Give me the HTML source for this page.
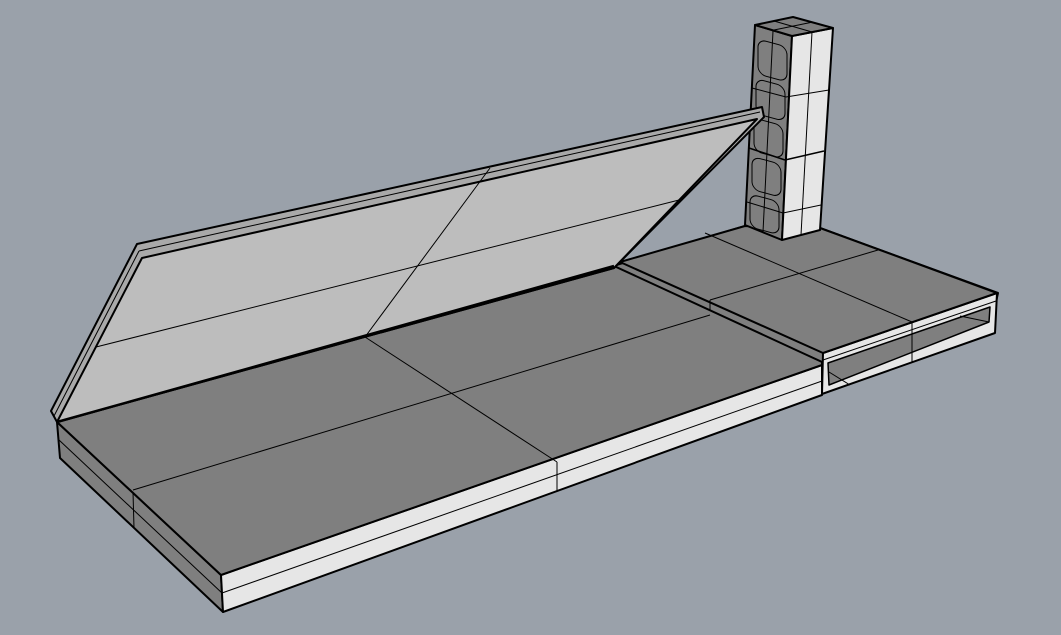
<!DOCTYPE html>
<html><head><meta charset="utf-8"><style>
html,body{margin:0;padding:0;background:#9aa1aa;}
svg{display:block}
</style></head><body>
<svg width="1061" height="635" viewBox="0 0 1061 635" xmlns="http://www.w3.org/2000/svg" stroke="#000" stroke-linejoin="round">
<rect width="1061" height="635" fill="#9aa1aa" stroke="none"/>

<!-- right platform -->
<polygon points="613,266 745,226 820,228 998,293 996,302 823,362 822,394 613,268" fill="#7f7f7f" stroke-width="2"/>
<!-- right platform front face -->
<polygon points="823,353 997,293 995,333 822,394" fill="#e6e6e6" stroke-width="2"/>
<polygon points="828,363 990,307 989,322 829,385" fill="#7f7f7f" stroke-width="1.5"/>
<line x1="829" y1="372" x2="850" y2="385" stroke-width="1"/>
<line x1="960" y1="316" x2="989" y2="322" stroke-width="1"/>
<line x1="823" y1="360" x2="996" y2="301" stroke-width="1"/>
<line x1="912" y1="322" x2="912" y2="362" stroke-width="1"/>
<!-- right platform top -->
<polygon points="620,262 745,226 820,228 997,293 823,353" fill="#7f7f7f" stroke-width="2"/>
<line x1="705" y1="233" x2="912" y2="322" stroke-width="1"/>
<line x1="710" y1="300" x2="878" y2="250" stroke-width="1"/>
<line x1="613" y1="268" x2="823" y2="362" stroke-width="1"/>
<line x1="710" y1="300" x2="710" y2="310" stroke-width="1"/>

<!-- column -->
<polygon points="755,25 792,36 782,240 745,225" fill="#7f7f7f" stroke-width="2"/>
<polygon points="792,36 833,28 820,230 782,240" fill="#e6e6e6" stroke-width="2"/>
<polygon points="755,25 793,17 833,28 792,36" fill="#7f7f7f" stroke-width="2"/>
<line x1="774" y1="21" x2="812" y2="32" stroke-width="1"/>
<line x1="774" y1="30" x2="813" y2="22" stroke-width="1"/>
<line x1="773" y1="31" x2="763" y2="232" stroke-width="1"/>
<line x1="812" y1="32" x2="801" y2="235" stroke-width="1"/>
<line x1="786" y1="97" x2="829" y2="90" stroke-width="1"/>
<line x1="785" y1="160" x2="824" y2="151" stroke-width="1.5"/>
<line x1="783" y1="213" x2="821" y2="205" stroke-width="1"/>
<line x1="752" y1="88" x2="786" y2="97" stroke-width="1"/>
<line x1="749" y1="148" x2="785" y2="160" stroke-width="1.5"/>
<line x1="747" y1="202" x2="783" y2="213" stroke-width="1"/>
<g fill="none" stroke-width="1">
<rect x="758" y="39" width="29" height="35" rx="8" transform="skewY(15) translate(0,-203)"/>
<rect x="756" y="79" width="29" height="35" rx="8" transform="skewY(15) translate(0,-203)"/>
<rect x="754" y="119" width="29" height="33" rx="8" transform="skewY(15) translate(0,-203)"/>
<rect x="752" y="158" width="29" height="33" rx="8" transform="skewY(15) translate(0,-203)"/>
<rect x="750" y="196" width="29" height="33" rx="8" transform="skewY(15) translate(0,-203)"/>
</g>

<!-- left platform side face -->
<polygon points="57,422 221,575 223,612 60,458" fill="#7f7f7f" stroke-width="2"/>
<line x1="59" y1="440" x2="222" y2="593" stroke-width="1"/>
<line x1="133" y1="492" x2="134" y2="528" stroke-width="1"/>
<!-- front face -->
<polygon points="221,575 822,365 822,395 223,612" fill="#e6e6e6" stroke-width="2"/>
<line x1="222" y1="593" x2="822" y2="381" stroke-width="1"/>
<line x1="557" y1="462" x2="557" y2="492" stroke-width="1"/>
<!-- top face -->
<polygon points="57,422 614,266 822,362 822,365 221,575" fill="#7f7f7f" stroke-width="2"/>
<line x1="133" y1="490" x2="710" y2="315" stroke-width="1"/>
<line x1="365" y1="337" x2="557" y2="462" stroke-width="1"/>

<!-- panel -->
<polygon points="51,411 137,244 762,107 764,117 614,268 57,422" fill="#a9a9a9" stroke-width="2"/>
<polygon points="57,422 142,258 757,119 614,268" fill="#bdbdbd" stroke-width="2"/>
<line x1="139" y1="251" x2="760" y2="112" stroke-width="1"/>
<line x1="54" y1="416" x2="139" y2="251" stroke-width="1"/>
<line x1="96" y1="347" x2="683" y2="199" stroke-width="1"/>
<line x1="365" y1="337" x2="490" y2="168" stroke-width="1"/>
<line x1="57" y1="422" x2="614" y2="266" stroke-width="2.5"/>
</svg>
</body></html>
